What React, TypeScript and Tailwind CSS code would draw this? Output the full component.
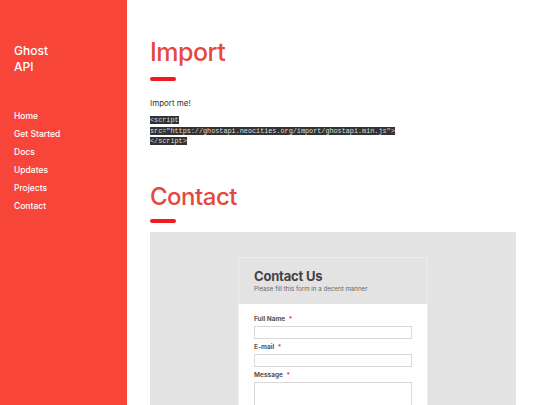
import React from "react";

const navItems = ["Home", "Get Started", "Docs", "Updates", "Projects", "Contact"];

const Field = ({ label, tall }: { label: string; tall?: boolean }) => (
  <div className="mb-[3px]">
    <label className="block text-[6.5px] font-bold leading-[10px] text-[#555] mb-[2px]">
      {label} <span className="text-[#e53935] ml-[2px]">*</span>
    </label>
    <div
      className={
        tall
          ? "h-[40px] border border-[#d9d9d9] bg-white"
          : "h-[13px] border border-[#d9d9d9] bg-white"
      }
    />
  </div>
);

export default function App() {
  return (
    <div className="flex h-[405px] overflow-hidden bg-white font-['Inter',sans-serif]">
      {/* Sidebar */}
      <aside className="w-[127px] shrink-0 bg-[#f74639] text-white pl-[14px] pt-[43px]">
        <div className="text-[12px] leading-[16px] font-medium">
          Ghost
          <br />
          API
        </div>
        <nav className="mt-[32px] flex flex-col">
          {navItems.map((item) => (
            <a key={item} className="text-[8.5px] leading-[18px] font-medium">
              {item}
            </a>
          ))}
        </nav>
      </aside>

      {/* Main */}
      <main className="flex-1 pl-[23px] pr-[24px] pt-[36px]">
        <h1 className="text-[25px] leading-[32px] font-medium text-[#e5493e] tracking-[-0.5px]">
          Import
        </h1>
        <div className="mt-[9px] h-[4px] w-[26px] rounded-full bg-[#ee1c1c]" />

        <p className="mt-[17px] text-[8px] leading-[10px] text-[#333]">Import me!</p>
        <pre className="mt-[7px] font-['Liberation_Mono',monospace] text-[6.8px] leading-[10.5px] text-[#ddd]">
          <span className="bg-[#333]">{"<script"}</span>
          {"\n"}
          <span className="bg-[#333]">{'src="https://ghostapi.neocities.org/import/ghostapi.min.js">'}</span>
          {"\n"}
          <span className="bg-[#333]">{"</script>"}</span>
        </pre>

        <h2 className="mt-[34px] text-[24px] leading-[32px] font-medium text-[#e5493e] tracking-[-0.5px]">
          Contact
        </h2>
        <div className="mt-[6px] h-[4px] w-[26px] rounded-full bg-[#ee1c1c]" />

        <section className="mt-[9px] h-[200px] bg-[#e4e3e3] pt-[25px] pl-[88px]">
          <div className="w-[190px] border border-[#ececec] bg-white">
            <div className="h-[46px] bg-[#e4e3e3] pl-[15px] pt-[10px]">
              <div className="text-[13px] leading-[16px] font-bold text-[#444] tracking-[-0.2px]">
                Contact Us
              </div>
              <div className="text-[6.2px] leading-[10px] text-[#666]">
                Please fill this form in a decent manner
              </div>
            </div>
            <div className="px-[15px] pt-[10px]">
              <Field label="Full Name" />
              <Field label="E-mail" />
              <Field label="Message" tall />
            </div>
          </div>
        </section>
      </main>
    </div>
  );
}
